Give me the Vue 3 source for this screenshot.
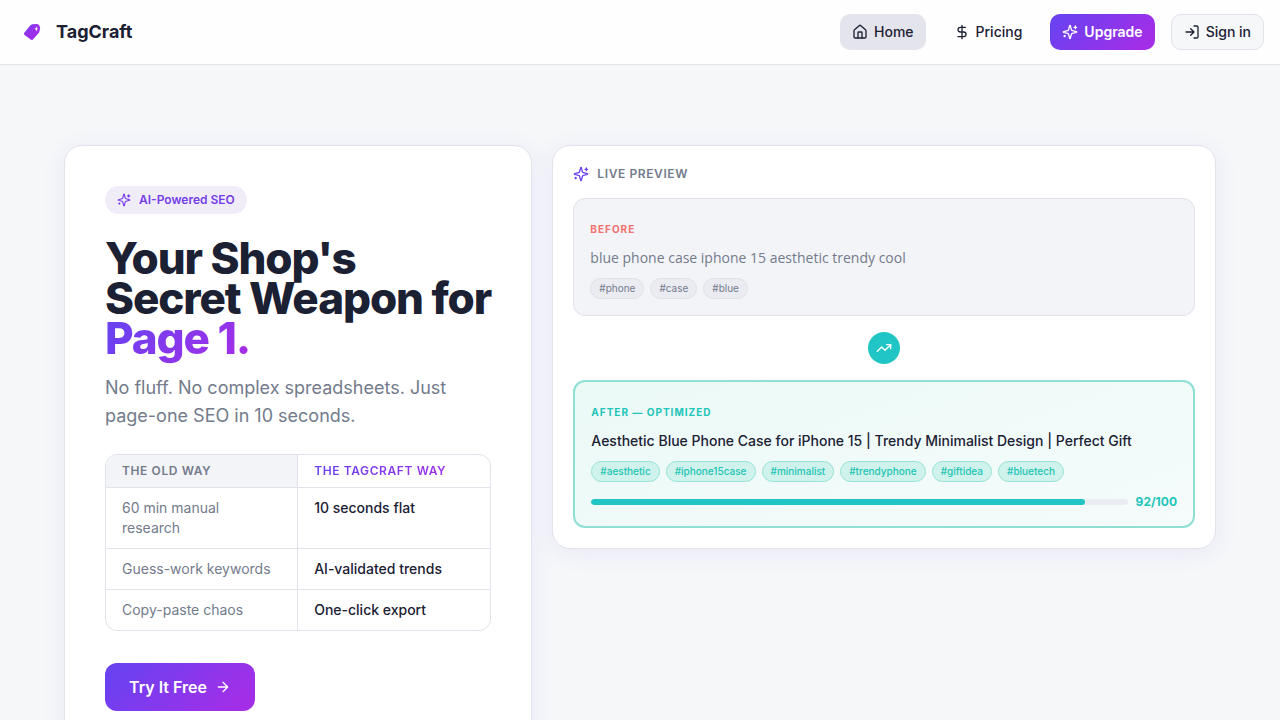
<script setup>
const rows = [
  ['60 min manual research', '10 seconds flat'],
  ['Guess-work keywords', 'AI-validated trends'],
  ['Copy-paste chaos', 'One-click export'],
]
const beforeTags = ['#phone', '#case', '#blue']
const afterTags = ['#aesthetic', '#iphone15case', '#minimalist', '#trendyphone', '#giftidea', '#bluetech']
const score = 92
</script>

<template>
  <svg class="defs" aria-hidden="true">
    <defs>
      <linearGradient id="brand" x1="0" y1="0" x2="1" y2="1">
        <stop offset="0" stop-color="#6b41f0" />
        <stop offset="0.5" stop-color="#9d2fea" />
        <stop offset="1" stop-color="#a42ee8" />
      </linearGradient>
      <symbol id="sparkles" viewBox="0 0 24 24">
        <path d="M9.937 15.5A2 2 0 0 0 8.5 14.063l-6.135-1.582a.5.5 0 0 1 0-.962L8.5 9.936A2 2 0 0 0 9.937 8.5l1.582-6.135a.5.5 0 0 1 .963 0L14.063 8.5A2 2 0 0 0 15.5 9.937l6.135 1.581a.5.5 0 0 1 0 .964L15.5 14.063a2 2 0 0 0-1.437 1.437l-1.582 6.135a.5.5 0 0 1-.963 0z" />
        <path d="M20 3v4M22 5h-4M4 17v2M5 18H3" />
      </symbol>
    </defs>
  </svg>
  <div class="page">
    <header class="topbar">
      <a class="brand" href="#">
        <svg class="logo" viewBox="0 0 32 32">
          <path fill="url(#brand)" fill-rule="evenodd" d="M8.300 16.800 14 9.700Q15 8.500 16.500 8.300L20.300 8Q21.800 7.900 22.600 8.800L23.600 10.200Q24.300 11.200 24.100 12.500L23.500 15.200Q23.200 16.500 22.300 17.600L16.800 23.500Q15.800 24.500 14.600 23.600L8.600 19Q7.500 18 8.300 16.800ZM20.300 10.200Q20.300 12.200 18.700 12.800Q20.200 13.300 20.300 15.600Q20.700 13.400 22 12.800Q20.600 12.200 20.300 10.200Z" />
        </svg>
        <span>TagCraft</span>
      </a>
      <nav class="nav">
        <a class="btn active" href="#">
          <svg class="icon" viewBox="0 0 24 24"><path d="M15 21v-8a1 1 0 0 0-1-1h-4a1 1 0 0 0-1 1v8" /><path d="M3 10a2 2 0 0 1 .709-1.528l7-5.999a2 2 0 0 1 2.582 0l7 5.999A2 2 0 0 1 21 10v9a2 2 0 0 1-2 2H5a2 2 0 0 1-2-2z" /></svg>
          Home
        </a>
        <a class="btn" href="#">
          <svg class="icon" viewBox="0 0 24 24"><path d="M12 2v20M17 5H9.500a3.500 3.500 0 0 0 0 7h5a3.500 3.500 0 0 1 0 7H6" /></svg>
          Pricing
        </a>
        <button class="btn primary" type="button">
          <svg class="icon"><use href="#sparkles" /></svg>
          Upgrade
        </button>
        <button class="btn outline" type="button">
          <svg class="icon" viewBox="0 0 24 24"><path d="M15 3h4a2 2 0 0 1 2 2v14a2 2 0 0 1-2 2h-4M10 17l5-5-5-5M15 12H3" /></svg>
          Sign in
        </button>
      </nav>
    </header>

    <main class="grid">
      <section class="card hero">
        <div class="badge">
          <svg class="icon small"><use href="#sparkles" /></svg>
          AI-Powered SEO
        </div>
        <h1>Your Shop's<br />Secret Weapon for<br /><span class="grad">Page 1.</span></h1>
        <p class="lead">No fluff. No complex spreadsheets. Just page-one SEO in 10 seconds.</p>
        <div class="tablewrap">
          <table>
            <thead>
              <tr><th scope="col">The old way</th><th scope="col"><span class="grad wide">The TagCraft way</span></th></tr>
            </thead>
            <tbody>
              <tr v-for="r in rows" :key="r[0]"><td>{{ r[0] }}</td><td>{{ r[1] }}</td></tr>
            </tbody>
          </table>
        </div>
        <button class="cta" type="button">
          Try It Free
          <svg class="icon" viewBox="0 0 24 24"><path d="M5 12h14M12 5l7 7-7 7" /></svg>
        </button>
      </section>

      <section class="card preview">
        <h2><svg class="icon"><use href="#sparkles" /></svg>Live preview</h2>
        <div class="panel before">
          <h3>Before</h3>
          <p>blue phone case iphone 15 aesthetic trendy cool</p>
          <ul class="tags"><li v-for="t in beforeTags" :key="t">{{ t }}</li></ul>
        </div>
        <div class="trend">
          <svg class="icon" viewBox="0 0 24 24"><path d="M22 7l-8.500 8.500-5-5L2 17" /><path d="M16 7h6v6" /></svg>
        </div>
        <div class="panel after">
          <h3>After — Optimized</h3>
          <p>Aesthetic Blue Phone Case for iPhone 15 | Trendy Minimalist Design | Perfect Gift</p>
          <ul class="tags"><li v-for="t in afterTags" :key="t">{{ t }}</li></ul>
          <div class="score">
            <div class="track"><div class="fill" :style="{ width: score + '%' }"></div></div>
            <strong>{{ score }}/100</strong>
          </div>
        </div>
      </section>
    </main>
  </div>
</template>

<style>
body { background: #f5f7f9; }
</style>

<style scoped>
* { box-sizing: border-box; }
.defs { position: absolute; width: 0; height: 0; }
.page { min-height: 100vh; font-family: Inter, sans-serif; color: #1b2033; font-size: 14px; line-height: 20px; }
h1, h2, h3, p, ul { margin: 0; padding: 0; }
a { color: inherit; text-decoration: none; }
button { font: inherit; color: inherit; border: 0; cursor: pointer; }
.icon { width: 16px; height: 16px; flex: none; fill: none; stroke: currentColor; stroke-width: 2; stroke-linecap: round; stroke-linejoin: round; }
.icon.small { width: 14px; height: 14px; }
.topbar { display: flex; align-items: center; justify-content: space-between; padding: 14px 16px; background: #fefefe; border-bottom: 1px solid #e1e2ea; }
.brand { display: flex; align-items: center; gap: 8px; font-size: 18px; font-weight: 700; line-height: 28px; }
.logo { width: 32px; height: 32px; }
.nav { display: flex; gap: 16px; }
.btn { display: flex; align-items: center; gap: 6px; height: 36px; padding: 0 12px; border-radius: 10px; font-weight: 500; }
.btn.active { background: #e4e4ec; }
.btn.primary, .cta { color: #fff; background: linear-gradient(135deg, #6b41f0 10%, #a42ee8 90%); }
.btn.primary { font-weight: 600; }
.btn.outline { background: #f5f7f9; border: 1px solid #e1e2ea; }
.grid { display: grid; grid-template-columns: repeat(12, 1fr); gap: 20px; align-items: start; max-width: 1280px; margin: 0 auto; padding: 80px 64px; }
.card { background: #fff; border: 1px solid #e1e2ea; border-radius: 18px; box-shadow: 0 4px 24px rgba(107, 65, 240, 0.08); }
.hero { grid-column: span 5; padding: 40px; }
.badge { display: flex; align-items: center; gap: 8px; width: fit-content; height: 28px; padding: 0 12px; border-radius: 14px; background: #f0edf9; color: #773de8; font-size: 12px; font-weight: 600; }
h1 { margin-top: 24px; font-size: 44px; line-height: 40px; font-weight: 800; letter-spacing: -0.025em; white-space: nowrap; }
.grad { display: inline-block; background: linear-gradient(135deg, #6b41f0 10%, #a42ee8 90%); background-clip: text; color: transparent; }
h1 .grad { padding-bottom: 8px; margin-bottom: -8px; }
.grad.wide { display: block; }
.lead { margin-top: 16px; font-size: 18px; line-height: 28px; color: #737b8c; }
.tablewrap { margin-top: 24px; border: 1px solid #e1e2ea; border-radius: 12px; overflow: hidden; }
table { width: 100%; table-layout: fixed; border-collapse: separate; border-spacing: 0; }
th, td { text-align: left; vertical-align: top; padding: 10px 16px; }
th { padding: 8px 16px; font-size: 12px; line-height: 16px; font-weight: 600; letter-spacing: 0.05em; text-transform: uppercase; color: #737b8c; }
th:first-child { background: #f3f4f8; }
th:first-child, td:first-child { border-right: 1px solid #e1e2ea; }
td { border-top: 1px solid #e1e2ea; font-weight: 500; }
td:first-child { color: #737b8c; font-weight: 400; }
.cta { display: flex; align-items: center; gap: 8px; height: 48px; margin-top: 32px; padding: 0 24px; border-radius: 12px; font-size: 16px; font-weight: 600; }
.preview { grid-column: span 7; padding: 20px; }
h2 { display: flex; align-items: center; gap: 8px; margin-bottom: 16px; font-size: 12px; line-height: 16px; font-weight: 600; letter-spacing: 0.05em; text-transform: uppercase; color: #737b8c; }
h2 .icon { color: #6b41f0; }
.panel { padding: 16px; border-radius: 12px; }
.before { background: #f3f4f8; border: 1px solid #e1e2ea; }
.after { background: linear-gradient(160deg, #ebf9f7, #f5fcfb); border: 2px solid #8de0d2; }
h3 { margin: 6px 0 0; font-size: 10px; line-height: 16px; font-weight: 700; letter-spacing: 0.1em; text-transform: uppercase; }
.before h3 { color: #f17070; }
.after h3 { color: #21c4b8; }
.panel p { line-height: 20px; margin: 11px 0 10px; }
.before p { font-family: "Open Sans", sans-serif; color: #737b8c; }
.after p { font-weight: 500; }
.tags { display: flex; flex-wrap: wrap; gap: 6px; list-style: none; }
.tags li { padding: 2px 8px; border: 1px solid #e0e0e8; border-radius: 11px; background: #ebebf2; color: #737b8c; font-size: 10px; line-height: 15px; }
.after .tags li { background: #d0f2ec; border-color: #96e2d5; color: #21c4b4; font-weight: 500; }
.trend { display: grid; place-items: center; width: 32px; height: 32px; margin: 16px auto; border-radius: 50%; background: #22c5c5; color: #fff; }
.score { display: flex; align-items: center; gap: 8px; margin-top: 12px; font-size: 12px; line-height: 16px; color: #21c4b8; }
.track { flex: 1; height: 6px; border-radius: 3px; background: #ebebf2; overflow: hidden; }
.fill { height: 100%; border-radius: 3px; background: #22c5c5; }
</style>
